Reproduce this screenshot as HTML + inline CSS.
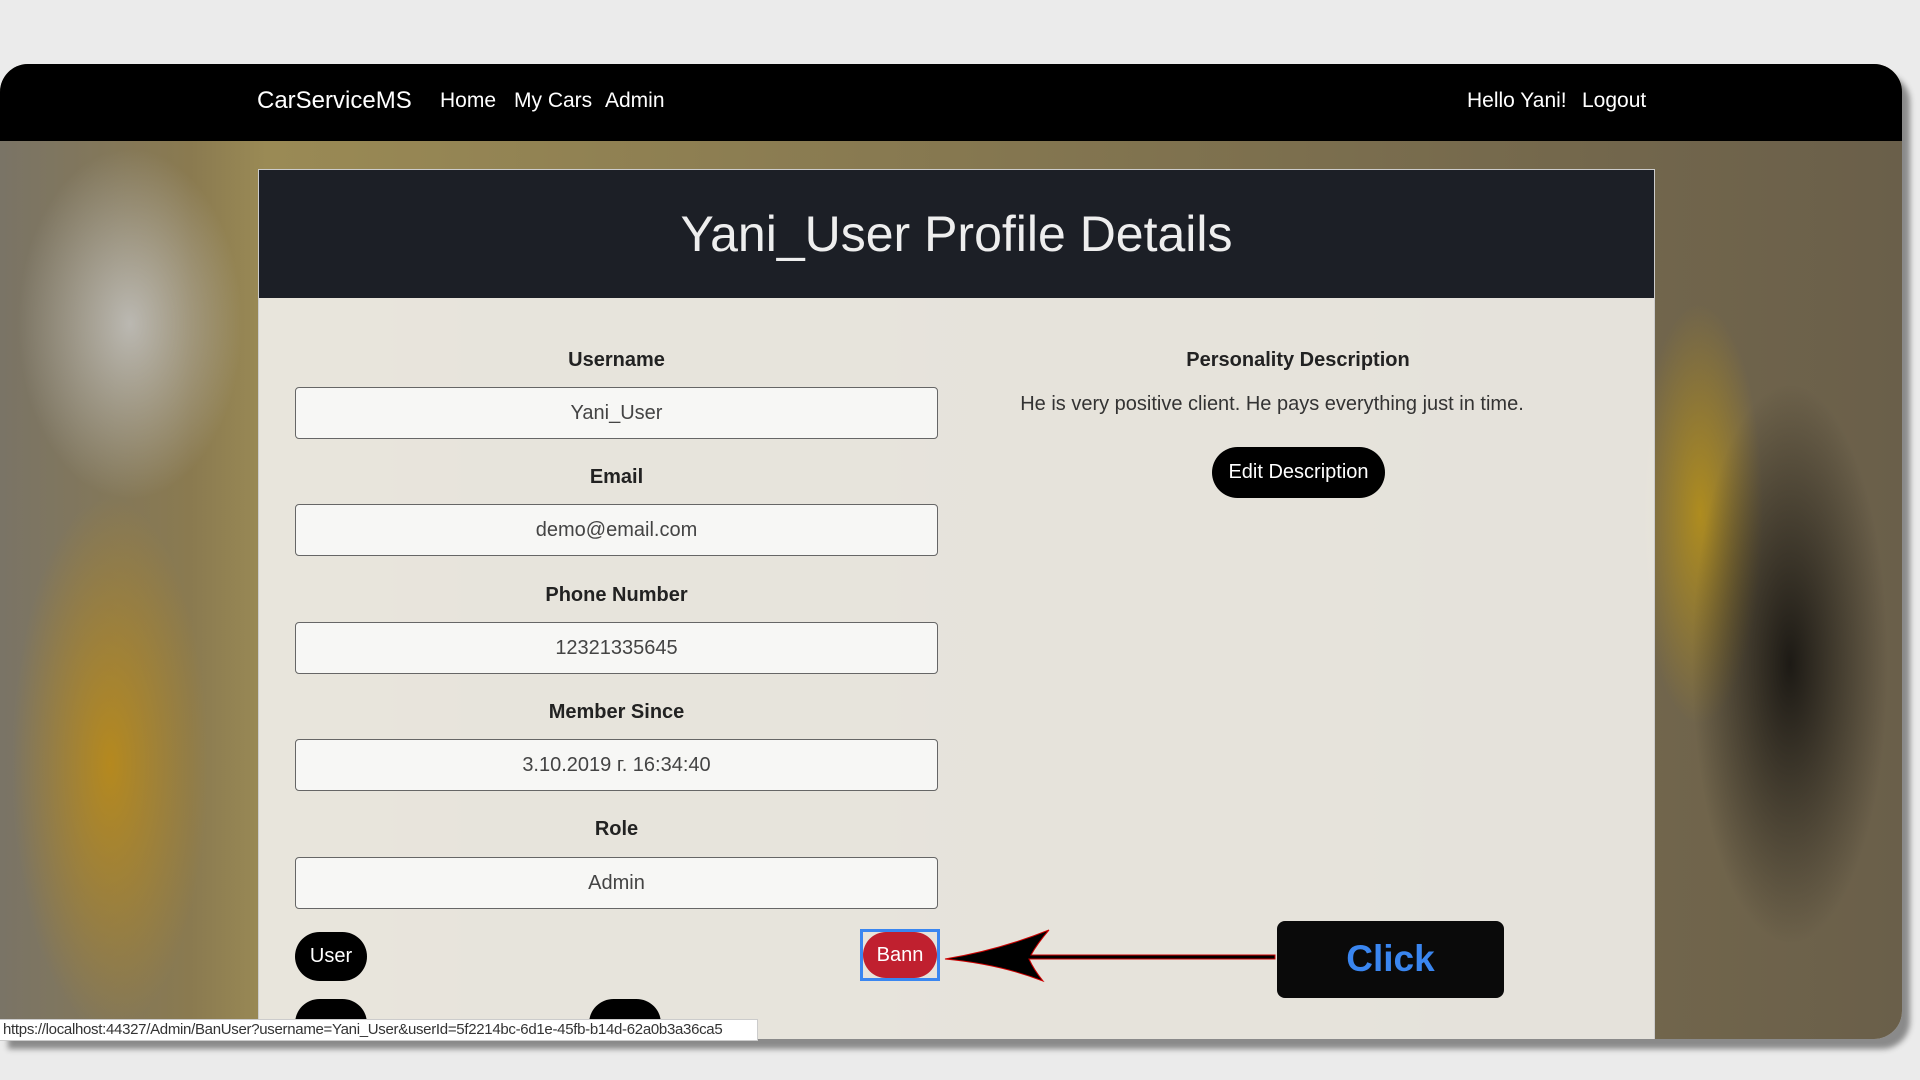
<!DOCTYPE html>
<html><head><meta charset="utf-8"><style>
*{box-sizing:border-box;margin:0;padding:0}
body{width:1920px;height:1080px;background:#ebebeb;font-family:"Liberation Sans",sans-serif;position:relative;overflow:hidden}
#frame{position:absolute;left:0;top:64px;width:1902px;height:975px;border-radius:28px 28px 28px 0;overflow:hidden;box-shadow:8px 10px 6px #8a8a8a;
background:
radial-gradient(ellipse 140px 380px at 110px 700px,rgba(190,140,20,.85),transparent 70%),
radial-gradient(ellipse 160px 250px at 130px 260px,rgba(200,200,200,.8),transparent 70%),
radial-gradient(ellipse 140px 400px at 1790px 600px,rgba(20,18,15,.9),transparent 70%),
radial-gradient(ellipse 90px 300px at 1700px 450px,rgba(190,150,20,.8),transparent 70%),
linear-gradient(90deg,#7a7466 0%,#8a7a50 10%,#9a8a55 14%,#6a5f4a 100%);}
#nav{position:absolute;left:0;top:0;width:100%;height:77px;background:#000;color:#fff}
#nav span{position:absolute;top:25px;font-size:21px}
#card{position:absolute;left:258px;top:105px;width:1397px;height:900px;background:rgba(238,236,230,.93);border:1px solid #ccc}
#hdr{height:128px;background:#1c1f26;color:#eee;text-align:center;font-size:50px;line-height:128px}
.lbl{position:absolute;left:36px;width:643px;text-align:center;font-weight:bold;font-size:20px;color:#222}
.inp{position:absolute;left:36px;width:643px;height:52px;border:1px solid #666;border-radius:4px;background:#f7f7f5;text-align:center;line-height:50px;font-size:20px;color:#444}
.btn{position:absolute;background:#000;color:#fff;border-radius:26px;font-size:20px;text-align:center}
</style></head><body>
<div id="frame">
<div id="nav">
<span style="left:257px;font-size:24px;top:23px">CarServiceMS</span>
<span style="left:440px">Home</span><span style="left:514px">My Cars</span><span style="left:605px">Admin</span>
<span style="left:1467px">Hello Yani!</span><span style="left:1582px">Logout</span>
</div>
<div id="card">
<div id="hdr">Yani_User Profile Details</div>
<div class="lbl" style="top:179px">Username</div><div class="inp" style="top:217px">Yani_User</div>
<div class="lbl" style="top:296px">Email</div><div class="inp" style="top:334px">demo@email.com</div>
<div class="lbl" style="top:414px">Phone Number</div><div class="inp" style="top:452px">12321335645</div>
<div class="lbl" style="top:531px">Member Since</div><div class="inp" style="top:569px">3.10.2019 г. 16:34:40</div>
<div class="lbl" style="top:648px">Role</div><div class="inp" style="top:687px">Admin</div>
<div class="btn" style="left:36px;top:762px;width:72px;height:49px;line-height:49px">User</div>
<div class="btn" style="left:36px;top:829px;width:72px;height:49px"></div>
<div class="btn" style="left:330px;top:829px;width:72px;height:49px"></div>
<div style="position:absolute;left:601px;top:759px;width:80px;height:52px;border:3px solid #3a86f0"></div>
<div class="btn" style="left:604px;top:762px;width:74px;height:46px;line-height:46px;background:#c0202f">Bann</div>
<div class="lbl" style="left:729px;width:620px;top:179px">Personality Description</div>
<div style="position:absolute;left:663px;width:700px;top:223px;text-align:center;font-size:20px;color:#333">He is very positive client. He pays everything just in time.</div>
<div class="btn" style="left:953px;top:277px;width:173px;height:51px;line-height:51px">Edit Description</div>
<div style="position:absolute;left:1018px;top:751px;width:227px;height:77px;background:#0a0a0a;border-radius:8px;color:#3a86f0;font-weight:bold;font-size:37px;text-align:center;line-height:75px">Click</div>
<svg style="position:absolute;left:680px;top:738px" width="340" height="80"><path d="M336 51 L90 51 Q95 62 104 73 Q60 56 6 51 Q60 42 110 22 Q98 36 92 47 L336 47 Z" fill="#000" stroke="#c00" stroke-width="1"/></svg>
</div>
</div>
<div style="position:absolute;left:0;top:1019px;width:758px;height:22px;background:#fff;border:1px solid #ccc;border-left:none;font-size:15px;color:#333;line-height:20px;padding-left:3px;letter-spacing:-.3px">https://localhost:44327/Admin/BanUser?username=Yani_User&amp;userId=5f2214bc-6d1e-45fb-b14d-62a0b3a36ca5</div>
</body></html>
